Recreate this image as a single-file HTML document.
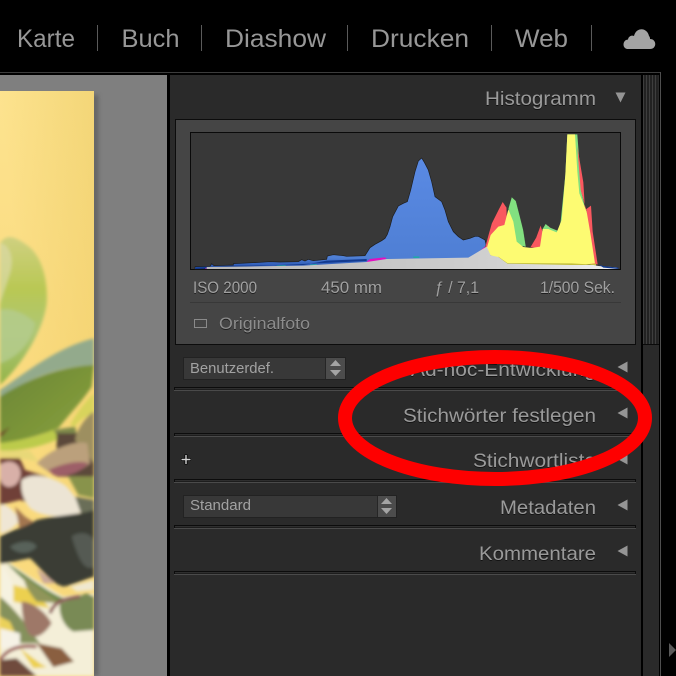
<!DOCTYPE html>
<html lang="de"><head><meta charset="utf-8"><title>Bibliothek</title>
<style>
html,body{margin:0;padding:0;background:#000;width:676px;height:676px;overflow:hidden}
svg{display:block;font-family:"Liberation Sans",sans-serif}
</style></head><body>
<svg width="676" height="676" viewBox="0 0 676 676" xmlns="http://www.w3.org/2000/svg">
<defs>
<linearGradient id="bg" gradientUnits="userSpaceOnUse" x1="0" y1="100" x2="94" y2="90"><stop offset="0" stop-color="#fde38f"/><stop offset="1" stop-color="#f3d678"/></linearGradient>
<linearGradient id="bgv" gradientUnits="userSpaceOnUse" x1="0" y1="91" x2="0" y2="380"><stop offset="0" stop-color="#f4cc62" stop-opacity="0"/><stop offset="1" stop-color="#f4cc62" stop-opacity=".4"/></linearGradient>
<linearGradient id="lf1" x1="0" y1="0" x2="0" y2="1"><stop offset="0" stop-color="#cfd080"/><stop offset=".35" stop-color="#b9c854"/><stop offset=".65" stop-color="#adc676"/><stop offset="1" stop-color="#94b448"/></linearGradient>
<linearGradient id="lf2" x1="0" y1="0" x2="1" y2="1"><stop offset="0" stop-color="#6a8536"/><stop offset="1" stop-color="#8aa23c"/></linearGradient>
<linearGradient id="blue" x1="0" y1="0" x2="0" y2="1"><stop offset="0" stop-color="#5a8ae4"/><stop offset=".9" stop-color="#4f7fd4"/><stop offset="1" stop-color="#1f4aa8"/></linearGradient>
<linearGradient id="gray" x1="0" y1="0" x2="1" y2="0"><stop offset="0" stop-color="#b8b8b8"/><stop offset=".7" stop-color="#d0d0d0"/><stop offset="1" stop-color="#f0f0f0"/></linearGradient>
<pattern id="st" width="3" height="10" patternUnits="userSpaceOnUse"><rect width="3" height="10" fill="#222"/><rect x="1" width="1" height="10" fill="#3e3e3e"/></pattern>
<filter id="b1" x="-10%" y="-10%" width="120%" height="120%"><feGaussianBlur stdDeviation="5"/></filter>
<filter id="sh" x="-100%" y="-10%" width="300%" height="120%"><feGaussianBlur stdDeviation="2.500"/></filter>
<clipPath id="ph"><rect x="0" y="91" width="94" height="585"/></clipPath>
</defs>

<rect width="676" height="676" fill="#000"/>

<!-- top nav -->
<g fill="#979797" font-size="25">
<text x="17" y="47" textLength="58" lengthAdjust="spacingAndGlyphs">Karte</text>
<text x="121.500" y="47" textLength="58" lengthAdjust="spacingAndGlyphs">Buch</text>
<text x="225" y="47" textLength="101" lengthAdjust="spacingAndGlyphs">Diashow</text>
<text x="371" y="47" textLength="98" lengthAdjust="spacingAndGlyphs">Drucken</text>
<text x="515" y="47" textLength="53" lengthAdjust="spacingAndGlyphs">Web</text>
</g>
<g fill="#5a5a5a"><rect x="97" y="25" width="1" height="26"/><rect x="201" y="25" width="1" height="26"/><rect x="347" y="25" width="1" height="26"/><rect x="491" y="25" width="1" height="26"/><rect x="591" y="25" width="1" height="26"/></g>
<path d="M628 49 C622 49 622 40 628 39.500 C628.500 36 632 35 634 36 C636 27 647 27 649 36 C650 37 650 38 650 39 C657 39 657 49 650 49 Z" fill="#a4a4a4"/>

<!-- frame -->
<rect x="0" y="72" width="660.500" height="1" fill="#3c3c3c"/>
<rect x="660" y="72" width="1" height="604" fill="#4e4e4e"/>
<rect x="0" y="75" width="167" height="601" fill="#7f7f7f"/>

<!-- photo -->
<rect x="92" y="95" width="6" height="581" fill="#505050" opacity=".6" filter="url(#sh)"/>
<g clip-path="url(#ph)">
<rect x="0" y="91" width="94" height="585" fill="url(#bg)"/>
<rect x="0" y="91" width="94" height="585" fill="url(#bgv)"/>
<g transform="translate(0,200) scale(.3333)">
<g filter="url(#b1)">
<path d="M0 130 C20 100 45 110 80 135 C125 165 145 240 140 310 C130 390 70 490 0 555Z" fill="url(#lf1)"/>
<path d="M0 330 C40 320 90 350 105 370 C95 420 60 470 0 490Z" fill="#b4cb8c" opacity=".85"/>
<path d="M0 130 C25 130 45 170 30 220 L0 310Z" fill="#dcdaa8" opacity=".7"/>
<path d="M0 570 C60 530 170 440 282 415 L282 495 C170 500 80 540 0 590Z" fill="#93aa8c"/>
<path d="M0 590 C60 550 170 500 282 495 L275 560 C250 600 210 640 175 685 C110 710 50 725 0 730Z" fill="url(#lf2)"/>
<path d="M0 730 C60 722 120 710 170 685 L178 715 C130 740 60 755 0 752Z" fill="#bccb4c"/>
<path d="M210 675 C235 630 260 600 282 580 L282 640 C250 650 230 670 225 680Z" fill="#d8d45c"/>
<path d="M0 752 L90 752 L115 785 L60 775 L0 770Z" fill="#e8d878"/>
<path d="M160 690 L225 680 L232 710 L170 705Z" fill="#7f8a4c"/>
<path d="M0 700 L30 680 L10 705 L0 712Z" fill="#6d4c2c"/>
<rect x="170" y="700" width="112" height="130" fill="#5b4a3a"/>
<path d="M230 700 C250 660 270 640 282 635 L282 790 L225 720Z" fill="#9d8f60"/>
<path d="M110 790 C150 750 220 720 262 730 L270 790 C230 825 180 830 145 815Z" fill="#bba07c"/>
<path d="M145 810 C190 790 240 780 265 790 C240 820 190 835 160 825Z" fill="#9d5f68"/>
<path d="M205 830 L282 830 L282 895 L235 885Z" fill="#88934c"/>
<path d="M0 775 L60 775 L75 810 L140 830 L120 920 L60 900 L0 915Z" fill="#6f4038"/>
<path d="M0 795 C25 775 60 785 62 820 C60 850 40 865 20 860 C5 855 0 840 0 830Z" fill="#d8b0a8"/>
<path d="M65 840 C100 815 160 830 200 860 C225 890 250 920 250 935 C200 955 130 955 90 925 C70 900 60 870 65 840Z" fill="#ece4d4"/>
<path d="M0 915 C20 910 40 930 60 960 C40 990 10 1000 0 1000Z" fill="#efe6d4"/>
<path d="M45 920 L75 950 L130 985 L100 1020 L60 990Z" fill="#a27650"/>
<path d="M225 890 L282 900 L282 950 L245 945Z" fill="#6a6e58"/>
<path d="M0 1010 C40 985 60 990 110 960 C170 945 240 945 282 930 L282 1130 C250 1140 220 1155 190 1160 C150 1150 120 1100 90 1075 C60 1080 25 1090 0 1092Z" fill="#3a3c34"/>
<path d="M215 1010 C240 990 282 1000 282 1030 L282 1100 C250 1120 230 1060 215 1010Z" fill="#555a52"/>
<path d="M30 1040 C60 1020 100 1020 110 1040 C90 1065 50 1065 30 1040Z" fill="#58625a"/>
<path d="M0 1092 L30 1090 L90 1130 L190 1190 L282 1180 L282 1428 L0 1428Z" fill="#f4efd8"/>
<path d="M0 1092 C30 1120 50 1170 40 1210 L0 1215Z" fill="#f6f2e0"/>
<path d="M40 1155 L100 1170 L150 1225 L90 1215 L40 1205Z" fill="#ecd050"/>
<path d="M20 1090 C60 1110 130 1170 190 1195 L175 1210 C130 1200 70 1140 20 1090Z" fill="#6f8a4a"/>
<path d="M70 1130 L180 1210 L110 1205 C90 1180 75 1160 70 1130Z" fill="#90955a"/>
<path d="M110 1105 L165 1150 L130 1150Z" fill="#c9a79a"/>
<path d="M210 1160 L282 1140 L282 1170 L230 1175Z" fill="#efe8d0"/>
<path d="M0 1190 C50 1230 90 1290 120 1330 L60 1330 C30 1290 10 1250 0 1250Z" fill="#85915c"/>
<path d="M65 1205 C100 1205 140 1240 155 1270 C130 1310 100 1320 85 1300 C70 1270 65 1240 65 1205Z" fill="#9e7868"/>
<path d="M180 1210 L260 1180 L282 1190 L282 1290 L220 1295 C190 1280 175 1240 180 1210Z" fill="#798a55"/>
<path d="M150 1240 C165 1200 200 1195 240 1190" stroke="#8d5a58" stroke-width="10" fill="none"/>
<path d="M0 1250 L30 1265 L50 1310 L0 1330Z" fill="#ead15a"/>
<path d="M0 1285 L60 1300 L60 1340 L0 1345Z" fill="#f6f2e6"/>
<path d="M0 1380 C20 1350 50 1335 110 1340" stroke="#9c5f5c" stroke-width="10" fill="none"/>
<path d="M110 1330 L185 1345 L222 1385 L160 1402 Z" fill="#8a5f40"/>
<path d="M0 1380 L50 1375 L110 1428 L0 1428Z" fill="#6f4c3c"/>
<path d="M60 1345 L120 1390 L140 1402 L100 1405Z" fill="#ecd050"/>
</g>
</g>
</g>

<!-- panel -->
<rect x="170" y="75" width="471" height="601" fill="#2a2a2a"/>

<!-- scroll strip -->
<rect x="643" y="75" width="16" height="601" fill="#2a2a2a"/>
<rect x="643" y="75" width="15" height="269" fill="url(#st)"/>
<rect x="643" y="344" width="16" height="1" fill="#0a0a0a"/>
<path d="M669 643 L676 650 L669 657Z" fill="#595959"/>

<!-- histogram box -->
<rect x="175.500" y="119.500" width="460" height="225" fill="#454545" stroke="#0c0c0c"/>
<rect x="190.500" y="132.500" width="430" height="137" fill="#383838" stroke="#0a0a0a"/>
<g transform="translate(170,75) scale(.33333)">
<path d="M75 582 L75 575 L120 574 L125 566 L132 572 L190 570 L190 566 L270 562 L300 560 L330 561 L385 560 L395 554 L405 558 L415 553 L430 557 L470 553 L472 543 L490 539 L520 542 L530 544 L585 542 L600 518 L615 508 L635 497 L645 490 L652 478 L660 455 L668 425 L685 393 L700 385 L712 380 L722 345 L735 290 L745 258 L755 249 L763 262 L775 285 L785 320 L795 365 L815 380 L825 405 L835 440 L850 470 L865 485 L880 495 L900 490 L915 484 L925 484 L945 495 L950 515 L945 582Z" fill="url(#blue)" stroke="#1c1c1c" stroke-width="2"/>
<path d="M590 560 L600 552 L645 547 L650 552 L590 562Z M895 550 L925 532 L950 510 L955 522 L905 552Z M105 576 L117 576 L112 582 L105 582Z M240 574 L255 574 L255 576 L240 577Z" fill="#e010c0"/>
<path d="M320 572 L345 570 L350 574 L320 574Z M420 569 L440 567 L440 573 L420 573Z M730 544 L748 544 L748 549 L730 549Z" fill="#20a8a8"/>
<path d="M75 578 L190 572 L400 570 L470 557 L590 552 L590 558 L75 582Z" fill="#123a90"/>
<path d="M945 518 L955 480 L965 445 L985 405 L998 380 L1010 398 L1012 470 L985 530 L950 525Z" fill="#f9585f" stroke="#2a2a2a" stroke-width="1"/>
<path d="M1080 518 L1098 488 L1112 450 L1118 470 L1135 452 L1145 462 L1130 520Z" fill="#f9585f" stroke="#2a2a2a" stroke-width="1"/>
<path d="M1015 400 L1025 366 L1038 378 L1050 425 L1060 465 L1068 516 L1040 510 L1020 440Z" fill="#82e080" stroke="#2a2a2a" stroke-width="1"/>
<path d="M1118 462 L1127 447 L1140 458 L1165 468 L1172 440 L1180 360 L1186 300 L1192 178 L1222 178 L1228 260 L1234 350 L1250 420 L1240 520 L1120 520Z" fill="#82e080"/>
<path d="M1222 215 L1240 322 L1245 405 L1263 392 L1268 470 L1283 568 L1262 568 L1250 410 L1232 345Z" fill="#f9585f"/>
<path d="M950 520 L962 480 L985 455 L1003 450 L1015 403 L1030 440 L1040 500 L1060 516 L1085 519 L1110 515 L1118 462 L1135 462 L1160 472 L1175 435 L1186 300 L1192 178 L1215 178 L1222 290 L1228 355 L1250 410 L1262 480 L1275 565 L1200 574 L1012 570 L985 550 L960 540Z" fill="#fdfb72"/>
<path d="M985 545 L1012 564 L1205 565 L1255 568 L1278 566 L1278 572 L1205 574 L1012 570 L985 552Z" fill="#c4c040"/>
<path d="M110 576 L400 572 L590 561 L650 552 L895 548 L950 515 L962 541 L985 546 L1012 566 L1200 570 L1270 570 L1285 573 L1340 577 L1345 582 L110 582Z" fill="url(#gray)"/>
<path d="M1285 568 L1300 573 L1345 578 L1345 582 L1300 578Z" fill="#123a90"/>
</g>

<!-- panel text -->
<g fill="#9a9a9a" style="filter:drop-shadow(0 1px 0 rgba(0,0,0,.55))">
<g font-size="19.500">
<text x="485" y="105" textLength="111" lengthAdjust="spacingAndGlyphs">Histogramm</text>
<text x="411" y="376" textLength="185" lengthAdjust="spacingAndGlyphs">Ad-hoc-Entwicklung</text>
<text x="403" y="422" textLength="193" lengthAdjust="spacingAndGlyphs">Stichwörter festlegen</text>
<text x="473" y="467" textLength="123" lengthAdjust="spacingAndGlyphs">Stichwortliste</text>
<text x="500" y="514" textLength="96" lengthAdjust="spacingAndGlyphs">Metadaten</text>
<text x="479" y="560" textLength="117" lengthAdjust="spacingAndGlyphs">Kommentare</text>
</g>
<g font-size="16.500" fill="#a0a0a0">
<text x="193" y="293" textLength="64" lengthAdjust="spacingAndGlyphs">ISO 2000</text>
<text x="321" y="293" textLength="61" lengthAdjust="spacingAndGlyphs">450 mm</text>
<text x="435" y="293" textLength="44" lengthAdjust="spacingAndGlyphs">ƒ / 7,1</text>
<text x="540" y="293" textLength="75" lengthAdjust="spacingAndGlyphs">1/500 Sek.</text>
<text x="219" y="329" textLength="91" lengthAdjust="spacingAndGlyphs" fill="#8c8c8c">Originalfoto</text>
</g>
</g>
<rect x="190" y="302" width="431" height="1" fill="#383838"/>
<rect x="194.500" y="319.500" width="12" height="8" fill="none" stroke="#8a8a8a"/>

<!-- triangles -->
<g fill="#959595">
<path d="M615.500 92.500 L625.500 92.500 L620.500 102.500Z"/>
<path d="M617.500 367 L627.500 361.500 L627.500 372.500Z"/>
<path d="M617.500 413 L627.500 407.500 L627.500 418.500Z"/>
<path d="M617.500 459 L627.500 453.500 L627.500 464.500Z"/>
<path d="M617.500 505 L627.500 499.500 L627.500 510.500Z"/>
<path d="M617.500 551 L627.500 545.500 L627.500 556.500Z"/>
</g>

<!-- dropdowns -->
<rect x="183.500" y="357.500" width="162" height="22" fill="#383838" stroke="#222"/>
<rect x="326" y="358" width="19" height="21" fill="#4c4c4c"/>
<rect x="325" y="358" width="1" height="21" fill="#262626"/>
<path d="M330 366 L335.500 360 L341 366Z M330 370 L341 370 L335.500 376Z" fill="#a4a4a4"/>
<text x="190" y="373" font-size="15" fill="#a2a2a2" textLength="84" lengthAdjust="spacingAndGlyphs">Benutzerdef.</text>
<rect x="183.500" y="495.500" width="213" height="22" fill="#383838" stroke="#222"/>
<rect x="378" y="496" width="18" height="21" fill="#4c4c4c"/>
<rect x="377" y="496" width="1" height="21" fill="#262626"/>
<path d="M381 504 L386.500 498 L392 504Z M381 508 L392 508 L386.500 514Z" fill="#a4a4a4"/>
<text x="190" y="510" font-size="15" fill="#a2a2a2" textLength="61" lengthAdjust="spacingAndGlyphs">Standard</text>

<!-- plus -->
<path d="M186 454.500 V464.500 M181 459.500 H191" stroke="#000" stroke-width="3"/>
<path d="M186 455 V464 M181.500 459.500 H190.500" stroke="#d4d4d4" stroke-width="1.400"/>

<!-- separators -->
<g fill="#0c0c0c">
<rect x="174" y="387" width="462" height="4"/><rect x="174" y="433" width="462" height="4"/><rect x="174" y="479" width="462" height="4"/><rect x="174" y="525" width="462" height="4"/><rect x="174" y="571" width="462" height="4"/>
</g>
<g fill="#4a4a4a">
<rect x="174" y="390" width="462" height="1"/><rect x="174" y="436" width="462" height="1"/><rect x="174" y="482" width="462" height="1"/><rect x="174" y="528" width="462" height="1"/><rect x="174" y="574" width="462" height="1"/>
</g>
<g fill="#2e2e2e">
<rect x="175" y="388" width="460" height="1.500"/><rect x="175" y="434" width="460" height="1.500"/><rect x="175" y="480" width="460" height="1.500"/><rect x="175" y="526" width="460" height="1.500"/><rect x="175" y="572" width="460" height="1.500"/>
</g>

<!-- red ellipse -->
<ellipse cx="495" cy="418" rx="150" ry="61" fill="none" stroke="#fe0000" stroke-width="14"/>
</svg>
</body></html>
